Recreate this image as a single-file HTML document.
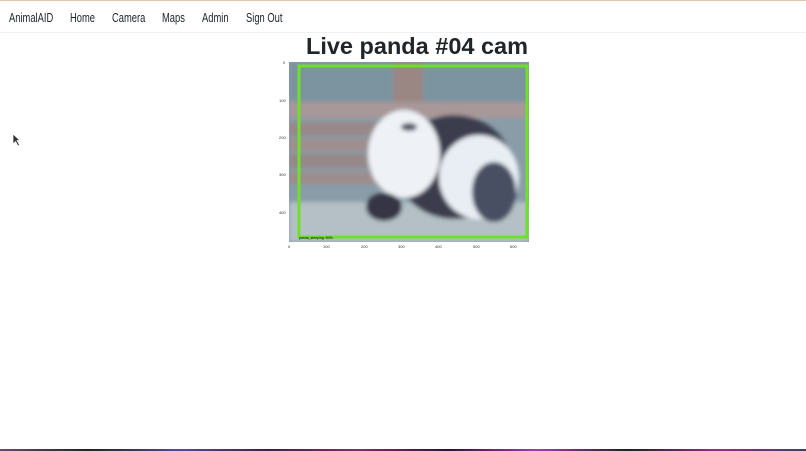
<!DOCTYPE html>
<html><head><meta charset="utf-8"><style>
*{margin:0;padding:0;box-sizing:border-box}
body{width:806px;height:451px;overflow:hidden;background:#fff;font-family:"Liberation Sans",sans-serif;position:relative}
.top{position:absolute;left:0;top:0;width:806px;height:1px;background:#e0c8a8}
nav{position:absolute;left:0;top:1px;width:806px;height:32px;border-bottom:1px solid #eef0f3}
nav span{position:absolute;top:9px;font-size:13px;color:#212529;transform:scaleX(0.72);transform-origin:left;white-space:nowrap}
h1{position:absolute;top:33px;left:14px;width:806px;text-align:center;font-size:23.5px;font-weight:bold;color:#212529}
.ax{position:absolute;font-size:4px;color:#333}
.bot{position:absolute;left:0;top:449px;width:806px;height:2px;background:linear-gradient(90deg,#6a4a6a,#222,#5a4a8a,#402040,#803060,#301030,#a040a0,#202020,#903080,#404060)}
</style></head><body>
<div class="top"></div>
<nav><span style="left:9px">AnimalAID</span><span style="left:70px">Home</span><span style="left:112px">Camera</span><span style="left:162px">Maps</span><span style="left:202px">Admin</span><span style="left:246px">Sign Out</span></nav>
<h1>Live panda #04 cam</h1>
<svg style="position:absolute;left:289px;top:62px" width="240" height="180" viewBox="0 0 240 180">
<defs><filter id="b"><feGaussianBlur stdDeviation="2"/></filter></defs>
<rect width="240" height="180" fill="#8a9ca8"/>
<g filter="url(#b)">
<rect x="0" y="0" width="240" height="40" fill="#7c94a0"/>
<rect x="104" y="0" width="30" height="60" fill="#9a8682"/>
<rect x="0" y="40" width="240" height="16" fill="#a8989a"/>
<rect x="0" y="60" width="100" height="14" fill="#98888a"/>
<rect x="0" y="77" width="100" height="12" fill="#9e8e8e"/>
<rect x="0" y="92" width="100" height="14" fill="#968888"/>
<rect x="0" y="110" width="100" height="12" fill="#9c8c8c"/>
<rect x="0" y="140" width="240" height="40" fill="#b4c0c6"/>
<ellipse cx="165" cy="105" rx="58" ry="52" fill="#3a3c4e"/>
<ellipse cx="115" cy="92" rx="36" ry="44" fill="#eef2f6"/>
<ellipse cx="190" cy="115" rx="40" ry="42" fill="#e8eef4"/>
<ellipse cx="205" cy="130" rx="22" ry="30" fill="#485064"/>
<ellipse cx="95" cy="145" rx="18" ry="14" fill="#343444"/>
<ellipse cx="120" cy="65" rx="8" ry="4" fill="#556"/>
</g>
<rect x="10" y="4" width="228" height="171" fill="none" stroke="#6de02a" stroke-width="3"/>
<text x="10" y="177" font-size="3.5" fill="#000" font-family="Liberation Sans">panda_sleeping: 50%</text>
</svg>
<div class="ax" style="left:283px;top:60px">0</div>
<div class="ax" style="left:279px;top:98px">100</div>
<div class="ax" style="left:279px;top:135px">200</div>
<div class="ax" style="left:279px;top:172px">300</div>
<div class="ax" style="left:279px;top:210px">400</div>
<div class="ax" style="left:288px;top:244px">0</div>
<div class="ax" style="left:323px;top:244px">100</div>
<div class="ax" style="left:361px;top:244px">200</div>
<div class="ax" style="left:398px;top:244px">300</div>
<div class="ax" style="left:435px;top:244px">400</div>
<div class="ax" style="left:473px;top:244px">500</div>
<div class="ax" style="left:510px;top:244px">600</div>
<svg style="position:absolute;left:12px;top:133px" width="10" height="14"><path d="M1 1 L1 11 L3.5 8.5 L6 13 L7.5 12 L5 7.5 L8 7.5 Z" fill="#333" stroke="#fff" stroke-width="0.7"/></svg>
<div class="bot"></div>
</body></html>
